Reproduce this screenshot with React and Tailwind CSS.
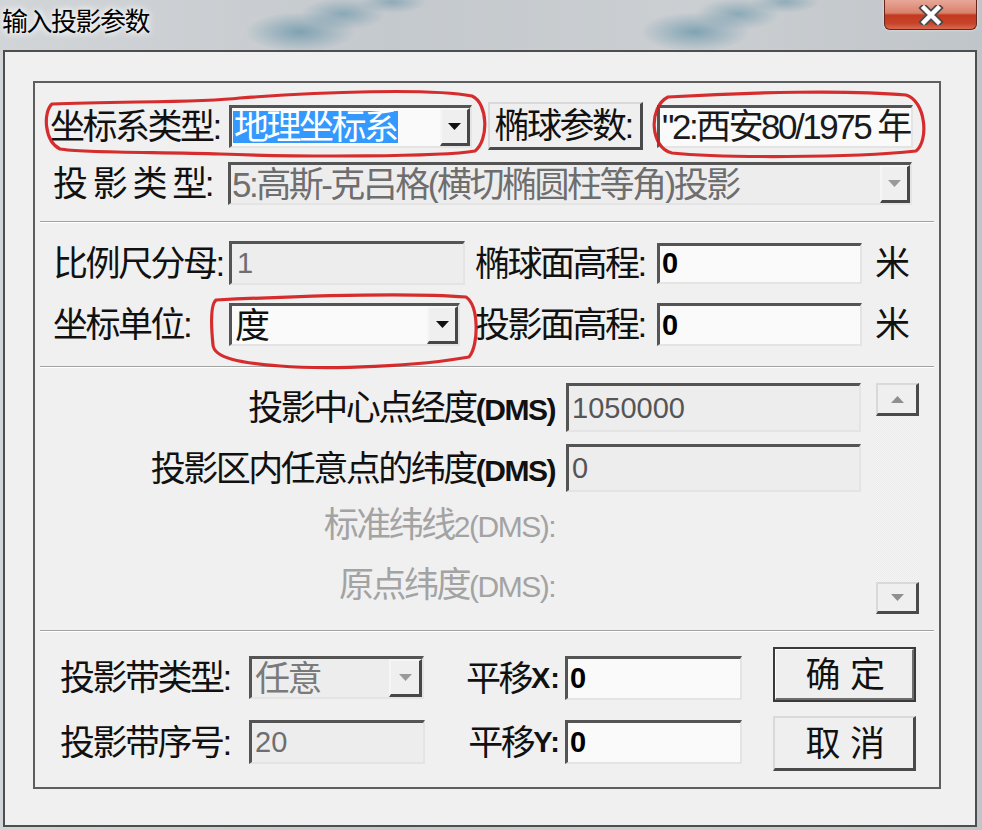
import React from "react";

function Tri({ up = false, color = "#111" }) {
  return (
    <svg width="13" height="7" viewBox="0 0 13 7">
      <polygon points={up ? "0,7 13,7 6.5,0" : "0,0 13,0 6.5,7"} fill={color} />
    </svg>
  );
}

function Sunken({ className = "", disabled = false, children }) {
  return (
    <div
      className={`flex items-center overflow-hidden shrink-0 border-t-[3px] border-l-[3px] border-b-2 border-r-2 border-t-[#545454] border-l-[#545454] border-b-[#e4e4e4] border-r-[#e4e4e4] ${
        disabled ? "bg-[#ededed]" : "bg-[#fafafa]"
      } ${className}`}
    >
      {children}
    </div>
  );
}

function DropBtn({ disabled, className = "w-[30px]" }) {
  return (
    <div
      className={`h-full shrink-0 flex items-center justify-center border-t-2 border-l-2 border-t-[#f6f6f6] border-l-[#f6f6f6] border-b-[3px] border-r-[3px] border-b-[#474747] border-r-[#474747] bg-[#efefef] ${className}`}
    >
      <Tri color={disabled ? "#9a9a9a" : "#111"} />
    </div>
  );
}

function Combo({ className = "", disabled = false, btn = "w-[30px]", children }) {
  return (
    <Sunken className={className} disabled={disabled}>
      <div className="flex-1 min-w-0 h-full flex items-center overflow-hidden whitespace-nowrap">
        {children}
      </div>
      <DropBtn disabled={disabled} className={btn} />
    </Sunken>
  );
}

const label = "text-[35px] leading-none tracking-[-2.5px] text-[#111] whitespace-nowrap";
const cjkField = "text-[35px] leading-none tracking-[-2.5px] whitespace-nowrap";
const digit = "text-[29px] leading-none whitespace-nowrap";
const dmsBold = "text-[30px] font-bold tracking-[-1.5px]";
const dmsReg = "text-[30px] tracking-[-1.5px]";

function Separator({ className = "" }) {
  return (
    <div className={`mx-[5px] h-[2px] border-t border-t-[#a2a2a2] border-b border-b-[#ffffff] ${className}`} />
  );
}

function Raised({ className = "", children }) {
  return (
    <div
      className={`flex items-center justify-center shrink-0 bg-[#efefef] border-t-2 border-l-2 border-t-[#d9d9d9] border-l-[#d9d9d9] border-b-[3px] border-r-[3px] border-b-[#4a4a4a] border-r-[#4a4a4a] ${className}`}
    >
      {children}
    </div>
  );
}

export default function App() {
  return (
    <div className="relative w-[982px] h-[830px] overflow-hidden flex flex-col bg-[#c4c9cd] font-['Liberation_Sans','Noto_Sans_CJK_SC',sans-serif] [background-image:radial-gradient(55px_20px_at_300px_32px,rgba(55,120,150,0.5),transparent),radial-gradient(42px_16px_at_343px_14px,rgba(55,120,150,0.42),transparent),radial-gradient(34px_11px_at_392px_2px,rgba(55,120,150,0.38),transparent),radial-gradient(55px_20px_at_695px_32px,rgba(55,120,150,0.5),transparent),radial-gradient(42px_16px_at_738px_14px,rgba(55,120,150,0.42),transparent),radial-gradient(34px_11px_at_785px_2px,rgba(55,120,150,0.38),transparent),linear-gradient(90deg,#d2d5d8,#c4c9cd_40%,#cbcfd2_70%,#c0c5c9)]">
      {/* Title bar */}
      <div className="h-[50px] shrink-0 flex items-start justify-between">
        <div className="mt-[7px] ml-[2px] text-[26px] leading-[30px] tracking-[-1.5px] text-black [text-shadow:0_0_6px_#fff,0_0_10px_#fff]">
          输入投影参数
        </div>
        <div className="mr-[5px] w-[93px] h-[30px] rounded-b-[6px] border border-t-0 border-[#6a2418] flex items-center justify-center [background-image:linear-gradient(180deg,#e8a797_0%,#d8806b_45%,#c3391f_52%,#c6432a_80%,#d86a50_100%)] shadow-[0_0_3px_rgba(255,255,255,0.6)]">
          <svg width="26" height="20" viewBox="0 0 26 20">
            <path d="M6 3 L20 17 M20 3 L6 17" stroke="#4a4a4a" strokeWidth="8" strokeLinecap="square" fill="none" />
            <path d="M6 3 L20 17 M20 3 L6 17" stroke="#ffffff" strokeWidth="4.5" strokeLinecap="square" fill="none" />
          </svg>
        </div>
      </div>

      {/* Client area */}
      <div className="ml-[3px] w-[974px] h-[777px] border-2 border-[#4e4e4e] bg-[#f0f0f0] flex flex-col">
        {/* Group box */}
        <div className="ml-[28px] mt-[29px] w-[908px] h-[708px] border-2 border-[#5e5e5e] flex flex-col">
          {/* Section 1 */}
          <div className="flex flex-col pt-[19px]">
            <div className="flex items-center h-[48px]">
              <div className={`w-[194px] pl-[15px] shrink-0 ${label}`}>坐标系类型:</div>
              <Combo className="w-[243px] h-[43px]">
                <span className={`ml-[1px] px-[1px] h-[32px] flex items-center bg-[#3399ff] text-white ${cjkField}`}>
                  地理坐标系
                </span>
              </Combo>
              <Raised className="ml-[16px] w-[155px] h-[48px]">
                <span className={`${label} pr-[4px]`}>椭球参数:</span>
              </Raised>
              <Sunken className="ml-[14px] w-[256px] h-[43px]">
                <span className={`ml-[2px] text-[#1a1a1a] ${cjkField}`}>"2:西安80/1975 年</span>
                <span className="ml-[4px] w-[2px] h-[26px] bg-[#555] shrink-0" />
              </Sunken>
            </div>
            <div className="flex items-center h-[43px] mt-[12px]">
              <div className={`w-[193px] pl-[18px] shrink-0 ${label}`}>投 影 类 型:</div>
              <Combo className="w-[684px] h-[43px]" disabled>
                <span className={`ml-[1px] text-[#6e6e6e] ${cjkField}`}>5:高斯-克吕格(横切椭圆柱等角)投影</span>
              </Combo>
            </div>
          </div>

          <Separator className="mt-[16px]" />

          {/* Section 2 */}
          <div className="flex flex-col">
            <div className="flex items-center h-[44px] mt-[18px]">
              <div className={`w-[194px] pl-[18px] shrink-0 ${label}`}>比例尺分母:</div>
              <Sunken className="w-[236px] h-[44px]" disabled>
                <span className={`ml-[5px] text-[#6e6e6e] ${digit}`}>1</span>
              </Sunken>
              <div className={`ml-[10px] w-[182px] shrink-0 ${label}`}>椭球面高程:</div>
              <Sunken className="w-[205px] h-[41px]">
                <span className={`ml-[2px] font-bold text-black ${digit}`}>0</span>
              </Sunken>
              <div className={`ml-[13px] ${label}`}>米</div>
            </div>
            <div className="flex items-center h-[47px] mt-[16px]">
              <div className={`w-[194px] pl-[18px] shrink-0 ${label}`}>坐标单位:</div>
              <Combo className="w-[231px] h-[43px]" btn="w-[31px]">
                <span className={`ml-[3px] text-[#111] ${cjkField}`}>度</span>
              </Combo>
              <div className={`ml-[15px] w-[182px] shrink-0 ${label}`}>投影面高程:</div>
              <Sunken className="w-[205px] h-[43px]">
                <span className={`ml-[2px] font-bold text-black ${digit}`}>0</span>
              </Sunken>
              <div className={`ml-[13px] ${label}`}>米</div>
            </div>
          </div>

          <Separator className="mt-[18px]" />

          {/* Section 3 */}
          <div className="flex pt-[15px]">
            <div className="w-[826px] flex flex-col">
              <div className="flex items-center h-[49px]">
                <div className={`w-[520px] text-right ${label}`}>
                  投影中心点经度<span className={dmsBold}>(DMS)</span>
                </div>
                <Sunken className="ml-[11px] w-[295px] h-[49px]" disabled>
                  <span className={`ml-[3px] text-[#555] ${digit}`}>1050000</span>
                </Sunken>
              </div>
              <div className="flex items-center h-[48px] mt-[12px]">
                <div className={`w-[520px] text-right ${label}`}>
                  投影区内任意点的纬度<span className={dmsBold}>(DMS)</span>
                </div>
                <Sunken className="ml-[11px] w-[295px] h-[48px]" disabled>
                  <span className={`ml-[3px] text-[#555] ${digit}`}>0</span>
                </Sunken>
              </div>
              <div className="flex items-center h-[48px] mt-[8px]">
                <div className={`w-[520px] text-right ${label} text-[#a3a3a3]`}>
                  标准纬线<span className={dmsReg}>2(DMS):</span>
                </div>
              </div>
              <div className="flex items-center h-[48px] mt-[12px]">
                <div className={`w-[520px] text-right ${label} text-[#a3a3a3]`}>
                  原点纬度<span className={dmsReg}>(DMS):</span>
                </div>
              </div>
            </div>
            <div className="ml-[15px] w-[43px] h-[231px] flex flex-col">
              <Raised className="h-[33px] w-full">
                <Tri up color="#8f8f8f" />
              </Raised>
              <div className="flex-1 [background-image:repeating-conic-gradient(#f6f6f6_0%_25%,#eaeaea_0%_50%)] bg-[length:2px_2px]" />
              <Raised className="h-[32px] w-full">
                <Tri color="#8f8f8f" />
              </Raised>
            </div>
          </div>

          <Separator className="mt-[16px]" />

          {/* Section 4 */}
          <div className="flex flex-col">
            <div className="flex items-start mt-[15px]">
              <div className={`w-[214px] pl-[25px] h-[43px] mt-[9px] flex items-center shrink-0 ${label}`}>投影带类型:</div>
              <Combo className="w-[175px] h-[43px] mt-[9px]" disabled btn="w-[33px]">
                <span className={`ml-[3px] text-[#7a7a7a] ${cjkField}`}>任意</span>
              </Combo>
              <div className={`w-[141px] h-[44px] mt-[9px] pr-[5px] flex items-center justify-end shrink-0 ${label}`}>
                平移<span className="text-[29px] font-bold tracking-normal">X:</span>
              </div>
              <Sunken className="w-[177px] h-[44px] mt-[9px]">
                <span className={`ml-[2px] font-bold text-black ${digit}`}>0</span>
              </Sunken>
              <div className="ml-[31px] w-[143px] h-[55px] shrink-0 border-2 border-[#3a3a3a] flex">
                <div className="flex-1 flex items-center justify-center gap-[12px] bg-[#efefef] border-t border-l border-t-[#fdfdfd] border-l-[#fdfdfd] border-b-2 border-r-2 border-b-[#6e6e6e] border-r-[#6e6e6e]">
                  <span className={label}>确</span>
                  <span className={label}>定</span>
                </div>
              </div>
            </div>
            <div className="flex items-start mt-[14px]">
              <div className={`w-[214px] pl-[25px] h-[44px] mt-[4px] flex items-center shrink-0 ${label}`}>投影带序号:</div>
              <Sunken className="w-[176px] h-[44px] mt-[4px]" disabled>
                <span className={`ml-[3px] text-[#6e6e6e] ${digit}`}>20</span>
              </Sunken>
              <div className={`w-[140px] h-[44px] mt-[4px] pr-[5px] flex items-center justify-end shrink-0 ${label}`}>
                平移<span className="text-[29px] font-bold tracking-normal">Y:</span>
              </div>
              <Sunken className="w-[177px] h-[44px] mt-[4px]">
                <span className={`ml-[2px] font-bold text-black ${digit}`}>0</span>
              </Sunken>
              <Raised className="ml-[31px] w-[143px] h-[55px] gap-[12px]">
                <span className={label}>取</span>
                <span className={label}>消</span>
              </Raised>
            </div>
          </div>
        </div>
      </div>

      {/* Red hand-drawn annotations */}
      <svg className="absolute left-0 top-0 pointer-events-none" width="982" height="830" viewBox="0 0 982 830">
        <g fill="none" stroke="#d21c1c" strokeWidth="3.2" strokeLinecap="round" strokeLinejoin="round" opacity="0.92">
          <path d="M52 104 C120 101, 200 103, 240 98 C320 92, 430 88, 472 96 C488 103, 489 140, 475 151 C440 157, 300 157, 220 154 C160 152, 82 153, 60 149 C44 141, 43 112, 52 104 Z" />
          <path d="M668 97 C750 92, 850 90, 906 95 C926 101, 929 141, 916 151 C850 158, 720 158, 672 153 C650 148, 648 107, 668 97 Z" />
          <path d="M216 300 C300 296, 400 292, 466 297 C479 306, 479 345, 469 357 C420 366, 330 370, 280 366 C240 363, 214 358, 213 345 C211 325, 210 305, 216 300 Z" />
        </g>
      </svg>
    </div>
  );
}
